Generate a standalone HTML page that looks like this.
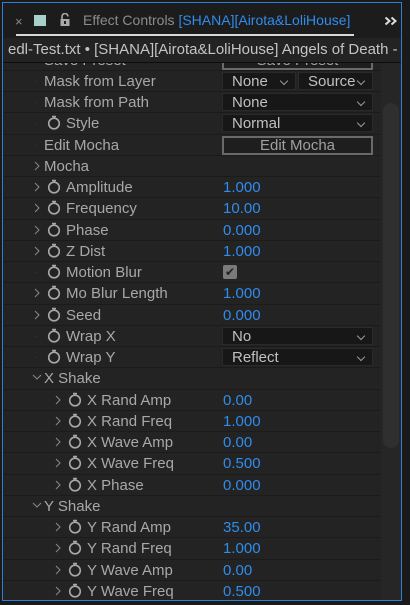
<!DOCTYPE html><html><head><style>
body{margin:0;width:410px;height:605px;background:#1a1a1a;overflow:hidden;font-family:"Liberation Sans",sans-serif;position:relative}
.panel{position:absolute;left:2px;top:2px;width:398px;height:597px;border:1px solid #2d7fd6;background:#232323;overflow:hidden}
.hdr{position:absolute;left:0;top:0;width:398px;height:35px;background:#1c1c1c}
.sub{position:absolute;left:0;top:35px;width:398px;height:24px;background:#232323;border-bottom:1px solid #0c0c0c;z-index:3;white-space:nowrap;color:#c4c4c4;font-size:15px;line-height:24px;padding-left:5px;overflow:hidden}
.row{position:absolute;left:0;width:377px;height:20.25px;border-bottom:1px solid #1b1b1b;color:#a8a8a8;font-size:15px;line-height:21px;white-space:nowrap}
.row span{position:absolute}
.row span.ic{line-height:0}
.row svg{display:block}
.v{color:#2f8ded;left:220px}
.dd{position:absolute;top:1px;height:18px;background:#171717;border:1px solid #2a2a2a;color:#c0c0c0;font-size:15px;line-height:18px;padding-left:9px;box-sizing:border-box}
.dd:after{content:"";position:absolute;right:8px;top:5px;width:5px;height:5px;border-right:1px solid #999;border-bottom:1px solid #999;transform:rotate(45deg)}
.btn{position:absolute;top:1px;left:219px;width:151px;height:19px;border:2px solid #6a6a6a;box-sizing:border-box;background:#1e1e1e;color:#a0a0a0;text-align:center;font-size:15px;line-height:15px}
.dot{color:#3a3a3a;font-size:10px}
.sb{position:absolute;left:378px;top:59px;width:20px;height:540px;background:#262626}
.th{position:absolute;left:380px;top:100px;width:16px;height:345px;background:#2f2f2f;border-radius:8px}
</style></head><body>
<div class="panel">
<div class="hdr">
<span style="position:absolute;left:12px;top:11px;color:#888;font-size:13px">×</span>
<div style="position:absolute;left:31px;top:12px;width:12px;height:11px;background:#a7d0cb"></div>
<svg style="position:absolute;left:57px;top:10px" width="10" height="14"><path d="M2 6V3.5a3 3 0 0 1 6 0" fill="none" stroke="#aaa" stroke-width="1.6"/><rect x="0.5" y="6" width="9" height="7" fill="#aaa"/><rect x="4" y="8" width="2" height="3" fill="#1c1c1c"/></svg>
<span style="position:absolute;left:80px;top:9px;font-size:14px;color:#8c8c8c">Effect Controls <span style="color:#2f8ded">[SHANA][Airota&amp;LoliHouse]</span></span>
<div style="position:absolute;left:13px;top:31px;width:338px;height:2px;background:#d8d8d8"></div>
<svg style="position:absolute;left:381px;top:13px" width="14" height="10"><path d="M1.5 1.5l4 3.5-4 3.5M7.5 1.5l4 3.5-4 3.5" fill="none" stroke="#ddd" stroke-width="2"/></svg>
</div>
<div class="sub">edl-Test.txt • [SHANA][Airota&amp;LoliHouse] Angels of Death - 0</div>
<div class="sb"></div><div class="th"></div>
<div id="rows"></div>
</div>
<script>
const sw='<svg width="14" height="15" viewBox="0 0 14 15"><circle cx="7" cy="8.5" r="5.3" fill="none" stroke="#a8a8a8" stroke-width="1.6"/><path d="M5 1.5h4M7 1.5v1.7" stroke="#a8a8a8" stroke-width="1.6"/></svg>';
const chR='<svg width="6" height="10"><path d="M1 1l4 4-4 4" fill="none" stroke="#8a8a8a" stroke-width="1"/></svg>';
const chD='<svg width="10" height="6"><path d="M1 1l4 4 4-4" fill="none" stroke="#8a8a8a" stroke-width="1"/></svg>';
const R=[
['d',41,'Save Preset',0,'btnS'],
['d',41,'Mask from Layer',0,'ml'],
['d',41,'Mask from Path',0,'dd:None'],
['d',41,'Style',1,'dd:Normal'],
['d',41,'Edit Mocha',0,'btnE'],
['c',41,'Mocha',0,''],
['c',41,'Amplitude',1,'v:1.000'],
['c',41,'Frequency',1,'v:10.00'],
['c',41,'Phase',1,'v:0.000'],
['c',41,'Z Dist',1,'v:1.000'],
['d',41,'Motion Blur',1,'cb'],
['c',41,'Mo Blur Length',1,'v:1.000'],
['c',41,'Seed',1,'v:0.000'],
['d',41,'Wrap X',1,'dd:No'],
['d',41,'Wrap Y',1,'dd:Reflect'],
['o',41,'X Shake',0,''],
['c',62,'X Rand Amp',1,'v:0.00'],
['c',62,'X Rand Freq',1,'v:1.000'],
['c',62,'X Wave Amp',1,'v:0.00'],
['c',62,'X Wave Freq',1,'v:0.500'],
['c',62,'X Phase',1,'v:0.000'],
['o',41,'Y Shake',0,''],
['c',62,'Y Rand Amp',1,'v:35.00'],
['c',62,'Y Rand Freq',1,'v:1.000'],
['c',62,'Y Wave Amp',1,'v:0.00'],
['c',62,'Y Wave Freq',1,'v:0.500'],
];
let h='';
R.forEach((r,i)=>{
 const top=46.5+21.25*i; let s='';
 const x=r[1];
 if(r[0]=='c') s+=`<span class="ic" style="left:${x-10}px;top:5px">${chR}</span>`;
 else if(r[0]=='o') s+=`<span class="ic" style="left:${x-12}px;top:6px">${chD}</span>`;
 else s+=`<span class="dot" style="left:${x-10}px;top:0">·</span>`;
 let lx=x;
 if(r[3]){s+=`<span class="ic" style="left:${x+3}px;top:2px">${sw}</span>`;lx=x+22;}
 s+=`<span style="left:${lx}px;top:0">${r[2]}</span>`;
 const w=r[4];
 if(w.startsWith('v:')) s+=`<span class="v" style="top:0">${w.slice(2)}</span>`;
 else if(w.startsWith('dd:')) s+=`<div class="dd" style="left:219px;width:151px">${w.slice(3)}</div>`;
 else if(w=='ml') s+=`<div class="dd" style="left:219px;width:74px">None</div><div class="dd" style="left:295px;width:75px">Source</div>`;
 else if(w=='btnE') s+=`<div class="btn">Edit Mocha</div>`;
 else if(w=='btnS') s+=`<div class="btn">Save Preset</div>`;
 else if(w=='cb') s+=`<div style="position:absolute;left:220px;top:3px;width:14px;height:14px;background:#7a7a7a;border-radius:2px;color:#222;font-size:12px;line-height:14px;text-align:center">✔</div>`;
 h+=`<div class="row" style="top:${top}px">${s}</div>`;
});
document.getElementById('rows').innerHTML=h;
</script>
</body></html>
